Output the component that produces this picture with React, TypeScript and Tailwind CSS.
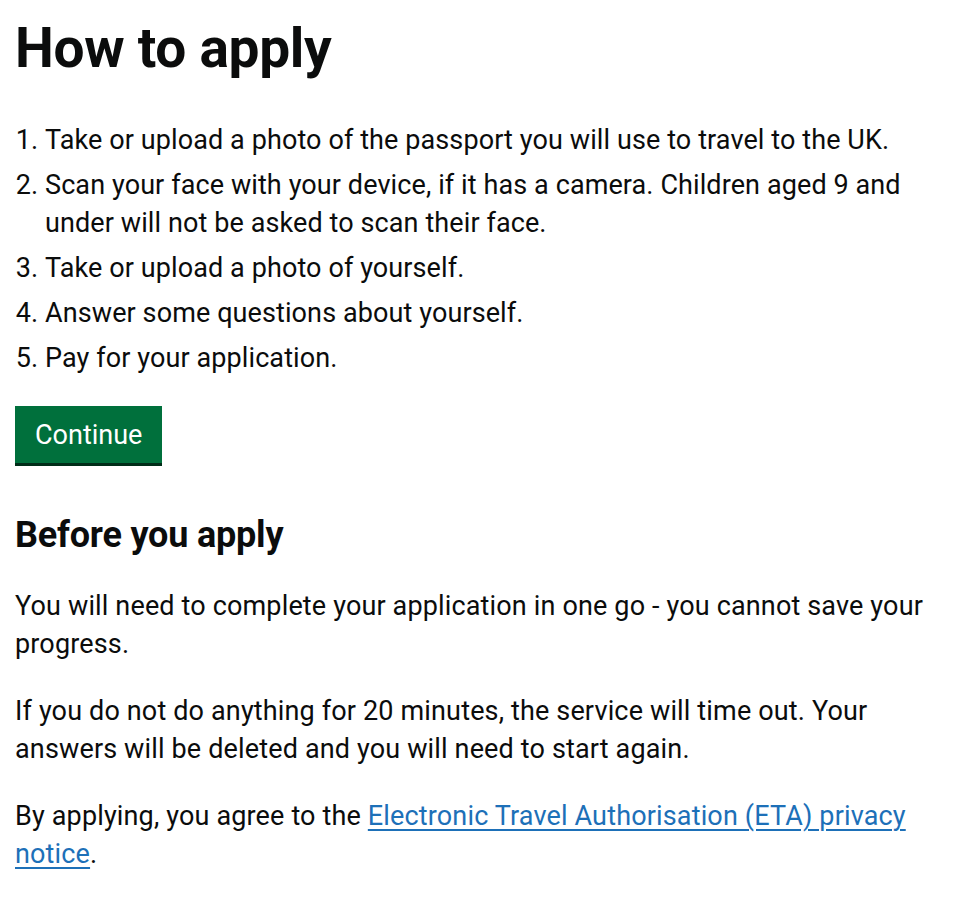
const steps = [
  "Take or upload a photo of the passport you will use to travel to the UK.",
  "Scan your face with your device, if it has a camera. Children aged 9 and under will not be asked to scan their face.",
  "Take or upload a photo of yourself.",
  "Answer some questions about yourself.",
  "Pay for your application.",
];

export default function App() {
  return (
    <main className="min-h-screen bg-white px-[15px] pt-[12px] font-['Roboto','Liberation_Sans',sans-serif] text-[#0b0c0c]">
      <h1 className="mb-[37px] text-[55px] font-bold leading-[72px] tracking-[-0.3px]">How to apply</h1>

      <ol className="mb-[29px] list-decimal pl-[30px] text-[27px] leading-[38px] tracking-[0.1px]">
        {steps.map((step) => (
          <li key={step} className="mb-[7px] pl-0">
            {step}
          </li>
        ))}
      </ol>

      <button
        type="button"
        className="mb-[52px] bg-[#00703c] px-[20px] pb-[10px] pt-[11px] text-[27px] leading-[36px] text-white shadow-[0_3px_0_#002d18]"
      >
        Continue
      </button>

      <h2 className="mb-[33px] text-[36px] font-bold leading-[40px] tracking-[-0.2px]">Before you apply</h2>

      <div className="space-y-[30px] text-[27px] leading-[37.5px] tracking-[0.15px]">
        <p>You will need to complete your application in one go - you cannot save your progress.</p>
        <p>
          If you do not do anything for 20 minutes, the service will time out. Your answers will be deleted and you
          will need to start again.
        </p>
        <p>
          By applying, you agree to the{" "}
          <a
            href="#"
            className="text-[#1d70b8] underline decoration-[2px] underline-offset-[4px]"
          >
            Electronic Travel Authorisation (ETA) privacy notice
          </a>
          .
        </p>
      </div>
    </main>
  );
}
